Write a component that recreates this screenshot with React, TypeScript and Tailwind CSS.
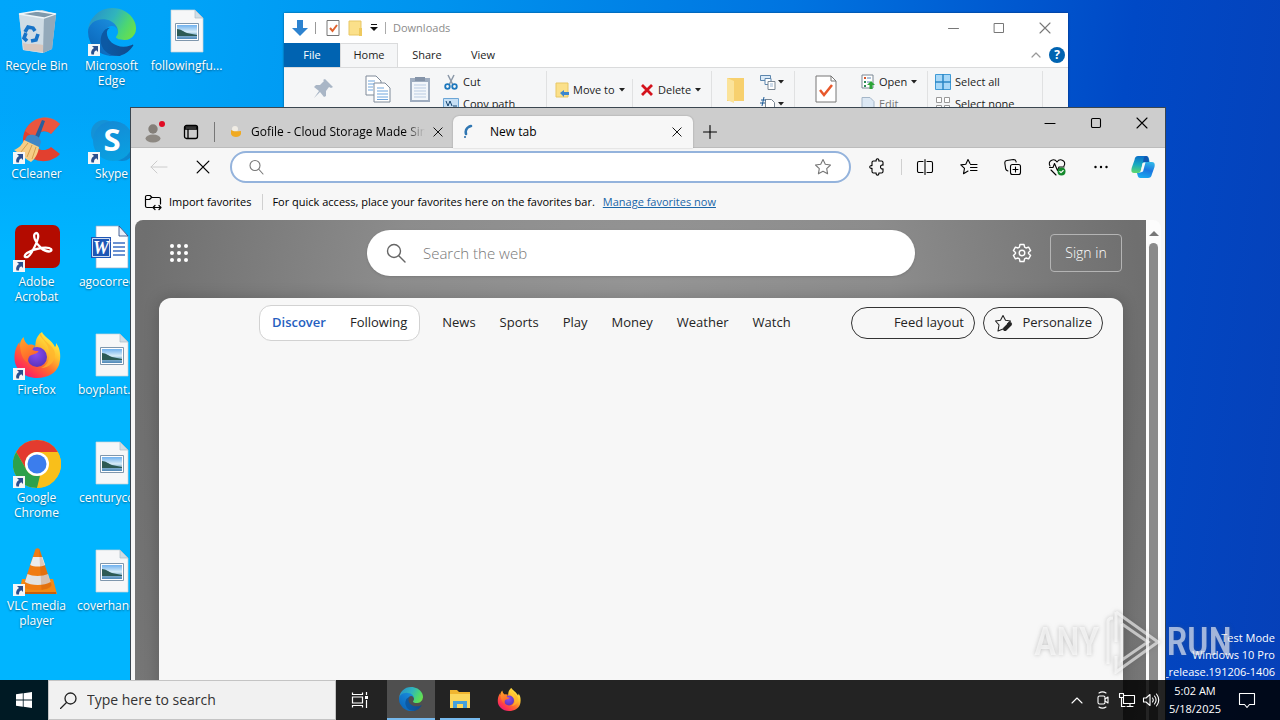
import React from "react";

type IconProps = { className?: string };
type Kids = { children?: React.ReactNode; className?: string };

/* ---------- logos ---------- */

function EdgeLogo({ className = "size-12" }: IconProps) {
  const id = React.useId();
  return (
    <svg viewBox="0 0 256 256" className={className} aria-hidden="true">
      <defs>
        <linearGradient id={id + "a"} x1="0.2" y1="0.5" x2="1" y2="0.5">
          <stop offset="0" stopColor="#0c59a4" />
          <stop offset="1" stopColor="#114a8b" />
        </linearGradient>
        <linearGradient id={id + "b"} x1="0.9" y1="0.1" x2="0.3" y2="1">
          <stop offset="0" stopColor="#1b8fdc" />
          <stop offset="0.5" stopColor="#1279cd" />
          <stop offset="1" stopColor="#0b66b8" />
        </linearGradient>
        <linearGradient id={id + "c"} x1="0" y1="0.3" x2="1" y2="0.7">
          <stop offset="0" stopColor="#2792c8" />
          <stop offset="0.45" stopColor="#30b4bd" />
          <stop offset="0.75" stopColor="#4bd674" />
          <stop offset="1" stopColor="#6be04a" />
        </linearGradient>
      </defs>
      <path fill={`url(#${id}a)`} d="M235.68 195.44a93.73 93.73 0 0 1-10.54 4.71 101.87 101.87 0 0 1-35.9 6.46c-47.32 0-88.54-32.55-88.54-74.32a31.48 31.48 0 0 1 16.43-27.31c-42.8 1.8-53.8 46.4-53.8 72.53 0 73.88 68.09 81.37 82.76 81.37 7.91 0 19.84-2.3 27-4.56l1.31-.44a128.34 128.34 0 0 0 66.6-52.8 4 4 0 0 0-5.32-5.64z" />
      <path fill={`url(#${id}b)`} d="M105.73 241.42a79.2 79.2 0 0 1-22.74-21.34 80.72 80.72 0 0 1 29.53-120c3.12-1.47 8.45-4.13 15.54-4a32.35 32.35 0 0 1 25.69 13 31.88 31.88 0 0 1 6.36 18.66c0-.21 24.46-79.6-80-79.6-43.9 0-80 41.66-80 78.21a130.15 130.15 0 0 0 12.11 56 128 128 0 0 0 156.38 67.11 75.55 75.55 0 0 1-62.78-8z" />
      <path fill={`url(#${id}c)`} d="M152.33 148.86c-.81 1.05-3.3 2.5-3.3 5.66 0 2.61 1.7 5.12 4.72 7.23 14.38 10 41.49 8.68 41.56 8.68a59.56 59.56 0 0 0 30.27-8.35 61.38 61.38 0 0 0 30.43-52.88c.26-22.41-8-37.31-11.34-43.91C223.46 23.84 177.72 0 128 0A128 128 0 0 0 0 126.2c.48-36.54 36.8-66.05 80-66.05 3.5 0 23.46.34 42 10.07 16.34 8.58 24.9 18.94 30.85 29.21 6.18 10.67 7.28 24.15 7.28 29.52s-2.74 13.33-7.8 19.91z" />
    </svg>
  );
}

function FirefoxLogo({ className = "size-12" }: IconProps) {
  const id = React.useId();
  return (
    <svg viewBox="0 0 48 48" className={className} aria-hidden="true">
      <defs>
        <linearGradient id={id + "f"} x1="0.85" y1="0.1" x2="0.2" y2="0.95">
          <stop offset="0" stopColor="#fff04a" />
          <stop offset="0.3" stopColor="#ffc02e" />
          <stop offset="0.6" stopColor="#ff6a2e" />
          <stop offset="0.85" stopColor="#ff3352" />
          <stop offset="1" stopColor="#e91d78" />
        </linearGradient>
        <radialGradient id={id + "p"} cx="0.45" cy="0.35" r="0.7">
          <stop offset="0" stopColor="#8a4cf0" />
          <stop offset="1" stopColor="#5a32b8" />
        </radialGradient>
        <linearGradient id={id + "o"} x1="0.2" y1="0" x2="0.6" y2="1">
          <stop offset="0" stopColor="#ffa32a" />
          <stop offset="1" stopColor="#ff5a2c" />
        </linearGradient>
      </defs>
      <path fill={`url(#${id}f)`} d="M29 0c1 4 10 8 13 15 1-1 1-2 1-4 5 6 5 15 3 22-3 8-11 13-22 13C11 46 1.500 37 1.500 26c0-5 1-11 5-16 0 2 0 3 1 4 1-2 2-3 3-4 0 3 1 5 3 6 3-1 6 0 8 1 2-4-1-11 7.500-17z" />
      <circle cx="24" cy="25" r="10" fill={`url(#${id}p)`} />
      <path fill={`url(#${id}o)`} d="M7 13c0-3 1-5 3.500-8 1 4 2 6 5 8 3-1 5 0 7 1-2 1-3 3-3 4 2 1 4 1 6 1-1 3-5 3-7 4-3 1-4 4-3 8-5-2-8-8-8.500-18z" />
      <path fill="#ffb52c" d="M26 2c2 5 12 10 10 23 0 5-3 9-8 11 8 0 14-6 14-14C42 13 29 10 28 1z" opacity=".75" />
    </svg>
  );
}

function ChromeLogo() {
  return (
    <svg viewBox="0 0 48 48" className="size-12" aria-hidden="true">
      <circle cx="24" cy="24" r="24" fill="#f9bf1a" />
      <path fill="#e33b2e" d="M24 0a24 24 0 0 1 20.800 12H24a12 12 0 0 0-10.400 18L3.200 12A24 24 0 0 1 24 0z" />
      <path fill="#2da14b" d="M3.200 12 13.600 30A12 12 0 0 0 24 36a12 12 0 0 0 3-.4L24 48A24 24 0 0 1 3.200 12z" />
      <path fill="#f9bf1a" d="M24 12h20.800A24 24 0 0 1 24 48l10.400-18A12 12 0 0 0 24 12z" />
      <circle cx="24" cy="24" r="12" fill="#fff" />
      <circle cx="24" cy="24" r="9.500" fill="#3b7ded" />
    </svg>
  );
}

function VlcLogo() {
  return (
    <svg viewBox="0 0 48 48" className="size-12" aria-hidden="true">
      <path d="M9 31h31l4 15H6z" fill="#f28a14" />
      <path d="M6 44h37v2H6z" fill="#c9600a" />
      <path d="M22.500 1c1-1 3-1 4 0l12 36c0 4-7 5-14 5s-14-1-14-5z" fill="#f07c12" />
      <path d="M20 9h9.500l2.700 8c-4 2-11 2-15 0z" fill="#ececec" />
      <path d="M14.500 26c5 2.500 15 2.500 20.500 0l2.600 8c-6 4-19.700 4-25.700 0z" fill="#e2e2e2" />
      <path d="M26 1l12.500 36c-2 4-7 4-10 5z" fill="#b64a00" opacity=".22" />
    </svg>
  );
}

function RecycleBin() {
  return (
    <svg viewBox="0 0 48 48" className="size-12" aria-hidden="true">
      <path d="M6 6 10 42l20 3 9-4 4-35-14-4z" fill="#c3d3de" />
      <path d="M6 6 31 10 30 45 10 42z" fill="#cfdce5" />
      <path d="M31 10 43 6 39 41l-9 4z" fill="#93a9ba" />
      <path d="M6 6 24 3l19 3-12 4z" fill="#7f99ac" stroke="#eef5f9" strokeWidth="1.300" />
      <path d="M10 35c6 2 13 0 20 2v7l-19-2z" fill="#dcb9a4" opacity=".6" />
      <g fill="none" stroke="#1673c8" strokeWidth="3.600">
        <path d="m12 24 3-5 5 1 2 3" />
        <path d="m25 26-2 6-5 1" />
        <path d="m14 33-3-3 2-5" />
      </g>
    </svg>
  );
}

function CCleanerLogo() {
  return (
    <svg viewBox="0 0 48 48" className="size-12" aria-hidden="true">
      <path d="M47 8 38 18c-6-6-16-2-16 7s9 12 16 6l9 7c-12 13-37 8-37-13C10 3 34-5 47 8z" fill="#e2402f" />
      <path d="M47 8 38 18c-6-6-16-2-16 4L12 15C18 1 36-4 47 8z" fill="#f0654a" opacity=".6" />
      <path d="m29 4 3 1-8 22-4-2z" fill="#285f9c" />
      <path d="M14 20c4-3 13-1 14 6l-2 6-15-6z" fill="#3f87c6" />
      <path d="m11 24 15 7c-1 7-4 12-8 15C11 42 5 36 1 34c5-2 8-5 10-10z" fill="#f5cd86" />
      <path d="m15 27-7 9m11-7-5 12m9-10-4 12" stroke="#d69f4e" fill="none" />
    </svg>
  );
}

function SkypeLogo() {
  return (
    <svg viewBox="0 0 48 48" className="size-12" aria-hidden="true">
      <defs>
        <linearGradient id="skype" x1="0" y1="0" x2="0.3" y2="1">
          <stop offset="0" stopColor="#1588d4" />
          <stop offset="1" stopColor="#0a9fe0" />
        </linearGradient>
      </defs>
      <circle cx="16" cy="17" r="13" fill="#1592d6" />
      <circle cx="34" cy="33" r="12" fill="#0c86cf" />
      <circle cx="25" cy="25" r="20" fill="url(#skype)" />
      <text x="24" y="35" textAnchor="middle" fontSize="31" fontWeight="700" fill="#fff" fontFamily="Open Sans, sans-serif">S</text>
    </svg>
  );
}

function AcrobatLogo() {
  return (
    <svg viewBox="0 0 48 48" className="size-12" aria-hidden="true">
      <rect x="2" y="1" width="45" height="43" rx="7" fill="#b30b00" />
      <path d="M14 33c-3 1-3-2 0-4 8-5 21-7 24-4 2 3-4 4-10-1-6-5-9-14-5-15 4 0 2 8-2 15-3 6-5 9-7 9z" fill="none" stroke="#fff" strokeWidth="2.300" />
    </svg>
  );
}

function PictureFile() {
  const id = React.useId();
  return (
    <svg viewBox="0 0 48 48" className="size-12" aria-hidden="true">
      <defs>
        <linearGradient id={id} x1="0" y1="0" x2="0" y2="1">
          <stop offset="0" stopColor="#6fb1ee" />
          <stop offset="0.5" stopColor="#d9edf8" />
          <stop offset="0.6" stopColor="#a6cbe0" />
          <stop offset="1" stopColor="#4f88b8" />
        </linearGradient>
      </defs>
      <path d="M8 2h24l8 8v34H8z" fill="#f6f7f8" stroke="#c9d2d8" strokeWidth=".7" />
      <path d="M32 2v8h8z" fill="#cfdde6" stroke="#aebcc6" strokeWidth=".7" />
      <path d="M12.500 15.500h23v17h-23z" fill="#fff" stroke="#7f97ad" />
      <path d="M14 17h20v14H14z" fill={`url(#${id})`} />
      <path d="M14 21c4 0 7 3 10 4l10 2v1H14z" fill="#2c5a54" />
    </svg>
  );
}

function WordFile() {
  return (
    <svg viewBox="0 0 48 48" className="size-12" aria-hidden="true">
      <path d="M8 2h23l9 10v32H8z" fill="#fff" stroke="#8ea7c9" strokeWidth=".7" />
      <path d="M31 2v10h9z" fill="#e6eefa" stroke="#1f3f7c" strokeWidth=".8" />
      <path d="M25 19h12m-12 4h12m-12 4h12m-12 4h12" stroke="#3d6fc4" strokeWidth="1.300" />
      <path d="M3 13h20v21H3z" fill="#1f57b5" />
      <path d="M4.500 14.500h17v18h-17z" fill="none" stroke="#fff" strokeWidth=".8" />
      <text x="13" y="30" textAnchor="middle" fontSize="18" fontWeight="700" fontStyle="italic" fill="#fff" fontFamily="Liberation Serif, serif">W</text>
    </svg>
  );
}

function ShortcutArrow() {
  return (
    <svg viewBox="0 0 12 12" className="absolute bottom-0 left-0 size-3" aria-hidden="true">
      <path d="M0 0h12v12H0z" fill="#f4f6f8" />
      <path d="M4 2h6v6L8.300 6.300C6.500 7 6 8.500 6 10.500H3.500C2.500 8 3.500 5.500 6 4z" fill="#2b4f8e" />
    </svg>
  );
}

function CopilotLogo() {
  return (
    <svg viewBox="0 0 24 24" className="size-6" aria-hidden="true">
      <defs>
        <linearGradient id="cpa" x1="0.3" y1="0" x2="0.2" y2="1">
          <stop offset="0" stopColor="#0a6fc9" />
          <stop offset="0.5" stopColor="#18aac0" />
          <stop offset="1" stopColor="#5fd96b" />
        </linearGradient>
        <linearGradient id="cpb" x1="0.7" y1="0" x2="0.4" y2="1">
          <stop offset="0" stopColor="#2fb6e8" />
          <stop offset="0.5" stopColor="#1b76e0" />
          <stop offset="1" stopColor="#19a8ef" />
        </linearGradient>
      </defs>
      <path d="M7 1h8c2 0 2.500 1 3 3l.5 3h-4c-2 0-2.500 1-3 3l-1.500 5c-.5 2-1 3-3 3H3c-3 0-3-3-2-6L3.500 5C4 2 5 1 7 1z" fill="url(#cpa)" />
      <path d="M12 7h6l-1-4c-.5-1-1-2-2-2-2 0-2.500 3-3 6z" fill="#1057b0" />
      <path d="M17 23H9.500c-2 0-2.500-1-3-3L6 18h1.500c2 0 2.500-1 3-3L12 10c.5-2 1-3 3-3h6c3 0 3 3 2.500 5L21 19c-.7 3-2 4-4 4z" fill="url(#cpb)" />
      <path d="m11.500 8 3-.5-2.500 9-2.500 1z" fill="#f7f7f7" />
    </svg>
  );
}

/* ---------- line icons ---------- */

function Line({ children, className = "size-5", box = 20, width = 1.1 }: Kids & { box?: number; width?: number }) {
  return (
    <svg viewBox={`0 0 ${box} ${box}`} className={className} fill="none" stroke="currentColor" strokeWidth={width} strokeLinecap="round" strokeLinejoin="round" aria-hidden="true">
      {children}
    </svg>
  );
}

const CloseGlyph = ({ className = "size-3" }: IconProps) => (
  <Line box={12} className={className} width={1.1}><path d="m1 1 10 10M11 1 1 11" /></Line>
);

const starPath = "m10 2.500 2.300 4.800 5.200.7-3.800 3.600.9 5.200-4.600-2.500-4.600 2.500.9-5.200L2.500 8l5.200-.7z";

/* ---------- desktop ---------- */

function DesktopIcon({ label, icon, shortcut = false }: { label: string; icon: React.ReactNode; shortcut?: boolean }) {
  return (
    <button type="button" className="flex h-[108px] w-[75px] flex-col items-center gap-0.5 pr-0.5 pt-2 text-center">
      <span className="relative block size-12 shrink-0">
        {icon}
        {shortcut && <ShortcutArrow />}
      </span>
      <span className="text-xs leading-[15px] text-white [text-shadow:0_1px_2px_rgba(0,0,0,0.45)]">{label}</span>
    </button>
  );
}

function Desktop() {
  return (
    <div className="flex">
      <div className="flex flex-col">
        <DesktopIcon label="Recycle Bin" icon={<RecycleBin />} />
        <DesktopIcon label="CCleaner" icon={<CCleanerLogo />} shortcut />
        <DesktopIcon label="Adobe Acrobat" icon={<AcrobatLogo />} shortcut />
        <DesktopIcon label="Firefox" icon={<FirefoxLogo />} shortcut />
        <DesktopIcon label="Google Chrome" icon={<ChromeLogo />} shortcut />
        <DesktopIcon label="VLC media player" icon={<VlcLogo />} shortcut />
      </div>
      <div className="flex flex-col">
        <DesktopIcon label="Microsoft Edge" icon={<EdgeLogo />} shortcut />
        <DesktopIcon label="Skype" icon={<SkypeLogo />} shortcut />
        <DesktopIcon label="agocorrec..." icon={<WordFile />} />
        <DesktopIcon label="boyplant.pn" icon={<PictureFile />} />
        <DesktopIcon label="centuryco..." icon={<PictureFile />} />
        <DesktopIcon label="coverhand..." icon={<PictureFile />} />
      </div>
      <div className="flex flex-col">
        <DesktopIcon label="followingfu..." icon={<PictureFile />} />
      </div>
    </div>
  );
}

/* ---------- file explorer ---------- */

const Caret = () => (
  <svg viewBox="0 0 6 4" className="h-1 w-1.5 shrink-0" aria-hidden="true"><path d="M0 0h6L3 3.500z" fill="#222" /></svg>
);

function RibbonItem({ icon, label, caret, muted }: { icon: React.ReactNode; label: string; caret?: boolean; muted?: boolean }) {
  return (
    <button type="button" className={`flex h-[22px] items-center gap-1 whitespace-nowrap ${muted ? "text-[#777]" : "text-[#1c1c1c]"}`}>
      {icon}
      <span>{label}</span>
      {caret && <Caret />}
    </button>
  );
}

function Explorer() {
  return (
    <section aria-label="Downloads" className="absolute left-[284px] top-[13px] flex h-[400px] w-[784px] flex-col bg-white text-[11px] text-[#1c1c1c] shadow-[0_0_2px_rgba(0,0,0,0.5)]">
      <header className="flex h-[30px] items-center">
        <div className="flex flex-1 items-center pl-2">
          <svg viewBox="0 0 16 18" className="h-[18px] w-4" aria-hidden="true"><path d="M5 1h6v8h5l-8 8-8-8h5z" fill="#2d83d0" /></svg>
          <span className="ml-[7px] h-3 w-px bg-[#999]" />
          <svg viewBox="0 0 14 18" className="ml-2.5 h-[18px] w-3.5" aria-hidden="true">
            <path d="M1 1.500h12v15H1z" fill="#fff" stroke="#777" />
            <path d="m4 9 2.500 3L11 6" fill="none" stroke="#e0632f" strokeWidth="2" />
          </svg>
          <svg viewBox="0 0 14 16" className="ml-2 h-4 w-3.5" aria-hidden="true"><path d="M1 1h12v14H1z" fill="#fbe08a" stroke="#e8c765" /><path d="M11 8h3v8h-3z" fill="#eec95e" /></svg>
          <svg viewBox="0 0 8 8" className="ml-2 size-2" aria-hidden="true"><path d="M1 0h6v1H1zM0 3h8L4 7z" fill="#111" /></svg>
          <span className="ml-[7px] h-3 w-px bg-[#aaa]" />
          <h2 className="ml-[7px] text-[#8b8b8b]">Downloads</h2>
        </div>
        <div className="flex text-[#777]">
          <button type="button" aria-label="Minimize" className="flex w-[45px] justify-center"><Line box={12} className="size-3" width={1}><path d="M.5 6.500h10" /></Line></button>
          <button type="button" aria-label="Maximize" className="flex w-[45px] justify-center"><Line box={12} className="size-3" width={1}><path d="M1.500 1.500h9v9h-9z" /></Line></button>
          <button type="button" aria-label="Close" className="flex w-[47px] justify-center"><CloseGlyph /></button>
        </div>
      </header>
      <div className="flex h-6 items-stretch text-center">
        <button type="button" className="w-14 bg-[#0063b1] text-white">File</button>
        <button type="button" className="w-[58px] border border-b-0 border-[#dadbdc] bg-[#f5f6f7]">Home</button>
        <button type="button" className="w-[58px]">Share</button>
        <button type="button" className="w-[54px]">View</button>
        <div className="flex flex-1 items-center justify-end gap-2 pr-[3px] text-[#999]">
          <button type="button" aria-label="Collapse ribbon"><Line box={10} className="size-2.5" width={1.2}><path d="m1 7 4-4 4 4" /></Line></button>
          <button type="button" aria-label="Help" className="flex size-4 items-center justify-center rounded-full bg-[#0063b1] text-xs font-bold leading-4 text-white">?</button>
        </div>
      </div>
      <div className="flex h-24 border-y border-[#dadbdc] bg-[#f5f6f7] pt-[3px]">
        <div className="flex w-[263px] border-r border-[#e0e1e2]">
          <svg viewBox="0 0 24 24" className="ml-[27px] mt-1.5 size-6" aria-hidden="true">
            <path d="m14 2 8 8-2 1-2-1-3 4 0 5-2 1-4-5-6 6 5-7-5-4 2-2h4l4-4-1-1z" fill="#a9b6c6" />
          </svg>
          <svg viewBox="0 0 26 28" className="ml-[30px] mt-1 h-7 w-[26px]" aria-hidden="true">
            <path d="M1 1h10l5 5v14H1z" fill="#fff" stroke="#7e8a99" />
            <path d="M9 8h11l5 5v14H9z" fill="#fff" stroke="#7e8a99" />
            <path d="M3 6h7M3 9h6M3 12h5M3 15h5M12 13h7M12 16h11M12 19h11M12 22h11M12 24.500h11" stroke="#6fa5dd" />
          </svg>
          <svg viewBox="0 0 22 28" className="ml-[18px] mt-1 h-7 w-[22px]" aria-hidden="true">
            <path d="M1 3h20v24H1z" fill="#9fadc0" />
            <path d="M3 7h16v18H3z" fill="#f2f6fb" />
            <path d="M6 2h10v4H6z" fill="#8493a8" />
            <path d="M5 10h12M5 13h12M5 16h12M5 19h12M5 22h12" stroke="#b9cbe2" />
          </svg>
          <div className="ml-3 flex flex-col">
            <RibbonItem label="Cut" icon={
              <svg viewBox="0 0 16 16" className="size-4" aria-hidden="true"><path d="m5 1 5 10M11 1 6 11" stroke="#8b98a8" strokeWidth="1.500" /><circle cx="4.500" cy="12.500" r="2.300" fill="none" stroke="#1e78bd" strokeWidth="1.800" /><circle cx="11.500" cy="12.500" r="2.300" fill="none" stroke="#1e78bd" strokeWidth="1.800" /></svg>
            } />
            <RibbonItem label="Copy path" icon={
              <svg viewBox="0 0 16 12" className="h-3 w-4" aria-hidden="true"><path d="M.5.500h15v11H.5z" fill="#c7e0f5" stroke="#6ca6d6" /><path d="m3 3 2 5 2-5 2 5M10 8h4" stroke="#14446f" fill="none" /></svg>
            } />
          </div>
        </div>
        <div className="mt-2 flex h-20 w-[86px] border-r border-[#e0e1e2] pl-2">
          <RibbonItem label="Move to" caret icon={
            <svg viewBox="0 0 14 16" className="h-4 w-3.5" aria-hidden="true"><path d="M1 1h12v14H1z" fill="#fbe08a" stroke="#e8c765" /><path d="m5 11 4-3v2h5v3H9v2z" fill="#3b87cf" /></svg>
          } />
        </div>
        <div className="mt-2 flex h-20 w-[78px] pl-[7px]">
          <RibbonItem label="Delete" caret icon={
            <svg viewBox="0 0 14 14" className="size-3.5" aria-hidden="true"><path d="m2 2 10 10M12 2 2 12" stroke="#d4121c" strokeWidth="2.800" /></svg>
          } />
        </div>
        <div className="flex w-[84px] border-x border-[#e0e1e2] pl-3.5">
          <svg viewBox="0 0 20 28" className="mt-1 h-7 w-5" aria-hidden="true"><path d="M1 3h17v23H1z" fill="#f7d06e" /><path d="m1 3 7 3v22l-7-3z" fill="#fbe39a" /></svg>
          <div className="ml-3.5 flex flex-col">
            <span className="flex h-[22px] items-center gap-0.5">
              <svg viewBox="0 0 16 16" className="size-4" aria-hidden="true"><path d="M.5 1.500h10v5H.5z" fill="#dcebf8" stroke="#5d86ad" /><path d="M5 4.500h6v6H5z" fill="#fff" stroke="#5d86ad" /><path d="M8 7.500h7v8H8z" fill="#fff" stroke="#7b8793" /><path d="M10 10h3m-3 2h3" stroke="#9db9d6" /></svg>
              <Caret />
            </span>
            <span className="flex h-[22px] items-center gap-0.5">
              <svg viewBox="0 0 16 16" className="size-4" aria-hidden="true"><path d="M5.500 3.500h6l3 3v9h-9z" fill="#fff" stroke="#7b8793" /><path d="M1 4h5M0 7h5M4 1 2 10" stroke="#1e5c97" /></svg>
              <Caret />
            </span>
          </div>
        </div>
        <div className="flex w-[133px] border-r border-[#e0e1e2] pl-5">
          <svg viewBox="0 0 22 28" className="mt-1 h-7 w-[22px]" aria-hidden="true"><path d="M1 1h15l5 5v21H1z" fill="#fff" stroke="#777" /><path d="M16 1v5h5" fill="none" stroke="#777" /><path d="m5 15 4 5 8-10" fill="none" stroke="#e8582b" strokeWidth="2.500" /></svg>
          <div className="ml-6 flex flex-col">
            <RibbonItem label="Open" caret icon={
              <svg viewBox="0 0 14 16" className="h-4 w-3.5" aria-hidden="true"><path d="M1 1h11v13H1z" fill="#fff" stroke="#7b8793" /><path d="M3 3h2v2H3z" fill="#d5562b" /><path d="M3 7h2v2H3zM3 11h2v2H3z" fill="#2c8b57" /><path d="M6 4h4m-4 4h3" stroke="#5b86b5" /><path d="m10 7 4 4h-2.500v4h-3v-4H6z" fill="#2da436" /></svg>
            } />
            <RibbonItem label="Edit" muted icon={
              <svg viewBox="0 0 14 16" className="h-4 w-3.5" aria-hidden="true"><path d="M1 1.500h8l4 4v9H1z" fill="#dce8f4" stroke="#a4b6c8" /></svg>
            } />
          </div>
        </div>
        <div className="flex w-[115px] flex-col border-r border-[#e0e1e2] pl-[7px]">
          <RibbonItem label="Select all" icon={
            <svg viewBox="0 0 16 16" className="size-4" aria-hidden="true"><path d="M.5.500h15v15H.5z" fill="#a8d8f8" stroke="#3f9ad6" /><path d="M8 0v16M0 8h16" stroke="#2b86c5" strokeWidth="1.500" /></svg>
          } />
          <RibbonItem label="Select none" icon={
            <svg viewBox="0 0 16 16" className="size-4" aria-hidden="true"><path d="M1.500 1.500h5v5h-5zM9.500 1.500h5v5h-5zM1.500 9.500h5v5h-5zM9.500 9.500h5v5h-5z" fill="#fff" stroke="#999" /></svg>
          } />
        </div>
      </div>
    </section>
  );
}

/* ---------- browser ---------- */

function TabStrip() {
  return (
    <header className="flex h-10 shrink-0 border-b border-[#bcbcbc] bg-[#cdcdcd]">
      <div className="flex w-[322px] shrink-0 items-center pt-2">
        <button type="button" aria-label="Profile" className="ml-2.5 flex w-7 justify-center">
          <svg viewBox="0 0 24 24" className="size-6" aria-hidden="true">
            <circle cx="10" cy="9" r="4.700" fill="#847f79" />
            <ellipse cx="10" cy="18.500" rx="7.500" ry="4" fill="#8d8882" />
            <circle cx="19" cy="4" r="3" fill="#e00b24" />
          </svg>
        </button>
        <button type="button" aria-label="Tab actions" className="ml-3.5">
          <Line box={16} className="size-4" width={1.3}><rect x="1.500" y="1.500" width="13" height="13" rx="2" /><path d="M2 3h12v2H2zM5 5v9" /></Line>
        </button>
        <span className="ml-[15px] h-5 w-px bg-[#777]" />
        <svg viewBox="0 0 12 14" className="ml-[15px] h-3.5 w-3" aria-hidden="true"><circle cx="5" cy="4" r="3" fill="#f0ece4" /><path d="M1 5c3 2 6 1 10 1v3c-1 4-9 4-10 0z" fill="#f0aa22" /></svg>
        <span className="ml-[9px] w-[174px] overflow-hidden whitespace-nowrap text-xs [mask-image:linear-gradient(to_right,#000_88%,transparent)]">Gofile - Cloud Storage Made Simple</span>
        <button type="button" aria-label="Close tab" className="ml-2"><CloseGlyph className="size-2.5" /></button>
      </div>
      <div className="mt-2 flex h-8 w-[240px] shrink-0 items-center rounded-t-md bg-[#f7f7f7] pl-[9px] pr-[11px] text-xs shadow-[0_0_2px_rgba(0,0,0,0.25)]">
        <svg viewBox="0 0 12 16" className="h-4 w-3" aria-hidden="true"><path d="M9 2C5 3 3 6 4 10" fill="none" stroke="#2f76b2" strokeWidth="2.600" strokeLinecap="round" strokeDasharray="3 1" /><circle cx="3" cy="13" r="1" fill="#2769a4" /></svg>
        <span className="ml-4 flex-1">New tab</span>
        <button type="button" aria-label="Close tab"><CloseGlyph className="size-2.5" /></button>
      </div>
      <button type="button" aria-label="New tab" className="ml-2.5 mt-2"><Line box={14} className="size-3.5" width={1.1}><path d="M7 .5v13M.5 7h13" /></Line></button>
      <div className="ml-auto flex h-[30px] items-center">
        <button type="button" aria-label="Minimize" className="flex w-[46px] justify-center"><Line box={12} className="size-3"><path d="M1 6.500h10" /></Line></button>
        <button type="button" aria-label="Maximize" className="flex w-[46px] justify-center"><Line box={12} className="size-3"><rect x="1.500" y="1.500" width="9" height="9" rx="1.200" /></Line></button>
        <button type="button" aria-label="Close" className="flex w-[46px] justify-center"><CloseGlyph /></button>
      </div>
    </header>
  );
}

function ToolButton({ label, children }: { label: string; children: React.ReactNode }) {
  return <button type="button" aria-label={label} className="flex w-11 shrink-0 justify-center">{children}</button>;
}

function Toolbar() {
  return (
    <div className="flex h-[38px] shrink-0 items-center">
      <button type="button" aria-label="Back" className="ml-[19px] text-[#cccccc]"><Line box={18} className="size-[18px]" width={1}><path d="M17 9H1m6-6L1 9l6 6" /></Line></button>
      <button type="button" aria-label="Stop" className="ml-7"><CloseGlyph className="size-3.5" /></button>
      <div className="ml-5 flex h-8 flex-1 items-center rounded-full border-2 border-[#94b3dc] bg-white px-4 text-[#777]">
        <Line box={16} className="size-4"><circle cx="7" cy="6.500" r="5" /><path d="m11 10.500 4 4.500" /></Line>
        <input type="text" aria-label="Address" className="min-w-0 flex-1 px-2 text-sm text-black outline-none" />
        <Line className="size-5"><path d={starPath} /></Line>
      </div>
      <div className="ml-[5px] flex items-center">
        <ToolButton label="Extensions">
          <Line><path d="M5.500 4h2.700c-.7-3 3.300-3 2.600 0h2.700A1.500 1.500 0 0 1 15 5.500v2.700c-1-.4-2.500 0-2.500 1.800s1.500 2.300 2.500 1.800v2.700a1.500 1.500 0 0 1-1.500 1.500h-2.700c.7 2.800-3.300 2.800-2.600 0H5.500A1.500 1.500 0 0 1 4 14.500v-3.200c-3 .7-3-3.300 0-2.600V5.500A1.500 1.500 0 0 1 5.500 4z" /></Line>
        </ToolButton>
        <span className="mx-px h-4 w-px bg-[#d0d0d0]" />
        <ToolButton label="Split screen">
          <Line><path d="M8 4.500H4A1.500 1.500 0 0 0 2.500 6v8A1.500 1.500 0 0 0 4 15.500h4M12 4.500h4A1.500 1.500 0 0 1 17.500 6v8a1.500 1.500 0 0 1-1.500 1.500h-4M10 2.500v15" /></Line>
        </ToolButton>
        <ToolButton label="Favorites">
          <Line><path d="M11 6.500 9 2.500 6.800 7.200l-5 .7 3.700 3.500-1 5.300L9 14M11.500 7.500H18M11.500 10.500H18M11.500 13.500H18" /></Line>
        </ToolButton>
        <ToolButton label="Collections">
          <Line><rect x="7.500" y="7.500" width="10" height="10" rx="2" /><path d="M12.500 10v5m-2.500-2.500h5M5 14c-1.500-.3-2-1-2.300-2L1.800 6C1.700 4.500 2.300 3.700 3.800 3.500l6.700-1c1.500 0 2.300.5 2.600 2v.5" /></Line>
        </ToolButton>
        <ToolButton label="Browser essentials">
          <Line><path d="M3 9C0 4 7 .5 10 5c3-4.500 10-1 7 4M2.500 10.500H6l1.500-4 3 7L12 10h5M4 13l5 5" /><circle cx="14.500" cy="14.500" r="4" fill="#14892c" stroke="none" /><path d="m12.800 14.500 1.200 1.200 2.200-2.200" stroke="#fff" /></Line>
        </ToolButton>
        <ToolButton label="Settings and more">
          <Line><path d="M4.500 10h.01M10 10h.01M15.500 10h.01" strokeWidth="2.400" /></Line>
        </ToolButton>
        <button type="button" aria-label="Copilot" className="ml-2 mr-2.5 shrink-0"><CopilotLogo /></button>
      </div>
    </div>
  );
}

function FavoritesBar() {
  return (
    <div className="flex h-[34px] shrink-0 items-center pb-0.5 pl-[13px] text-[11px]">
      <Line box={18} className="size-[18px]" width={1.2}><path d="M8 14.500H3A1.500 1.500 0 0 1 1.500 13V4A1.500 1.500 0 0 1 3 2.500h3l2 2h7A1.500 1.500 0 0 1 16.500 6v5M1.500 6.500h4l2-2M9 14.500h8m-6-2-2 2 2 2m4-4 2 2-2 2" /></Line>
      <button type="button" className="ml-[7px]">Import favorites</button>
      <span className="ml-[11px] mr-[9px] h-4 w-px bg-[#d0d0d0]" />
      <span>For quick access, place your favorites here on the favorites bar.</span>
      <a href="#favorites" className="ml-2 text-[#1a66a8] underline">Manage favorites now</a>
    </div>
  );
}

const topics = ["News", "Sports", "Play", "Money", "Weather", "Watch"];

function NewTabPage() {
  return (
    <main className="flex min-w-0 flex-1 flex-col overflow-hidden rounded-tl-lg bg-[radial-gradient(ellipse_at_50%_15%,#959595_0%,#8c8c8c_35%,#6f6f6f_70%,#777777_100%)] pl-6 pr-[23px]">
      <div className="flex h-[78px] shrink-0 items-start justify-between pt-2.5">
        <button type="button" aria-label="Apps" className="ml-2.5 mt-[13px] text-white">
          <svg viewBox="0 0 20 20" className="size-5" fill="currentColor" aria-hidden="true">
            {[3, 10, 17].map((y) => [3, 10, 17].map((x) => <circle key={`${x}-${y}`} cx={x} cy={y} r="2" />))}
          </svg>
        </button>
        <div className="ml-[81px] flex h-[46px] w-[548px] items-center rounded-full bg-white px-[18px] text-[#666] shadow-sm">
          <Line box={22} className="size-[22px]" width={1.4}><circle cx="9" cy="9" r="6.500" /><path d="m14 14 6 6" /></Line>
          <input type="text" aria-label="Search the web" placeholder="Search the web" className="ml-4 min-w-0 flex-1 text-[15px] font-light outline-none placeholder:text-[#777]" />
        </div>
        <div className="flex items-center gap-[18px] pr-px pt-1 text-white">
          <button type="button" aria-label="Page settings">
            <Line className="size-5" width={1.4}><circle cx="10" cy="10" r="2.800" /><path d="M8 1.500h4l.6 2.700 1.400.8 2.600-.9 2 3.500L16.500 9.500v1l2.100 1.900-2 3.500-2.600-.9-1.400.8-.6 2.700H8l-.6-2.700-1.400-.8-2.600.9-2-3.500 2.100-1.900v-1L1.400 7.600l2-3.500 2.600.9 1.400-.8z" /></Line>
          </button>
          <button type="button" className="h-[38px] w-[72px] rounded-sm border border-[#b4b4b4] text-sm font-light">Sign in</button>
        </div>
      </div>
      <section className="flex min-h-0 flex-1 items-start rounded-t-xl bg-[#f7f7f7] pl-[100px] pr-5 pt-[7px] text-[13px] text-[#242424] shadow-[0_0_16px_rgba(0,0,0,0.2)]">
        <div className="flex h-9 items-center gap-6 rounded-xl border border-[#d2d2d2] bg-white px-3">
          <button type="button" className="font-semibold text-[#2560c0]">Discover</button>
          <button type="button">Following</button>
        </div>
        <nav className="ml-[22px] flex h-9 items-center gap-6">
          {topics.map((t) => <a key={t} href="#feed">{t}</a>)}
        </nav>
        <div className="ml-auto flex gap-2 pt-0.5">
          <button type="button" className="flex h-8 w-[124px] items-center justify-end rounded-full border border-[#333] pr-2.5">Feed layout</button>
          <button type="button" className="flex h-8 w-[120px] items-center justify-end gap-2 rounded-full border border-[#333] pr-2.5">
            <Line width={1.1}><path d="m9 16-5 2 1-6L1.500 8l5-.7L9 2.500l2.500 4.800 5 .7-3 3" /><path d="m11 16 5-5" strokeWidth="4" /></Line>
            Personalize
          </button>
        </div>
      </section>
    </main>
  );
}

function Browser() {
  return (
    <section aria-label="Browser" className="absolute bottom-0 left-[130px] top-[107px] flex w-[1036px] flex-col border border-b-0 border-[#3a4650] bg-[#f7f7f7] text-black">
      <TabStrip />
      <Toolbar />
      <FavoritesBar />
      <div className="flex min-h-0 flex-1 pl-1 pr-1">
        <NewTabPage />
        <div className="flex w-[15px] flex-col items-center rounded-tr-lg bg-[#fcfcfc] pt-2.5">
          <svg viewBox="0 0 10 6" className="h-1.5 w-2.5" aria-hidden="true"><path d="m0 6 5-5 5 5z" fill="#777" /></svg>
          <div className="mt-[7px] w-[9px] flex-1 rounded-t-full bg-[#8a8a8a]" />
        </div>
      </div>
    </section>
  );
}

/* ---------- taskbar ---------- */

function Taskbar() {
  return (
    <footer className="absolute inset-x-0 bottom-0 flex h-10 items-stretch bg-black/86 text-white">
      <button type="button" aria-label="Start" className="flex w-12 items-center justify-center">
        <svg viewBox="0 0 16 16" className="size-4" fill="#fff" aria-hidden="true"><path d="M0 2.300 6.800 1.300v6.300H0zM7.600 1.200 16 0v7.600H7.600zM0 8.400h6.800v6.300L0 13.700zM7.600 8.400H16V16l-8.400-1.200z" /></svg>
      </button>
      <div className="flex w-72 items-center border border-[#c4c4c4] bg-[#f1f1f1] pl-[11px] text-[#222]">
        <Line box={17} className="size-[17px]" width={1.3}><circle cx="10.500" cy="6.500" r="5.500" /><path d="m6.500 10.500-6 6" /></Line>
        <input type="text" aria-label="Type here to search" placeholder="Type here to search" className="ml-2.5 min-w-0 flex-1 text-sm outline-none placeholder:text-[#333]" />
      </div>
      <button type="button" aria-label="Task view" className="flex w-[51px] items-center justify-center pr-1">
        <svg viewBox="0 0 18 16" className="h-4 w-[18px]" fill="none" stroke="#fff" strokeWidth="1.200" aria-hidden="true"><path d="M1.500 .5V2.500h10V.5M1.500 5h10v6h-10zM1.500 15.500v-2h10v2M15.500 0v3m0 5v8" /><path d="M14 4h3v3h-3z" fill="#fff" stroke="none" /></svg>
      </button>
      <button type="button" aria-label="Microsoft Edge" className="flex w-12 items-center justify-center border-b-2 border-[#76b9ed] bg-white/20"><EdgeLogo className="size-6" /></button>
      <button type="button" aria-label="File Explorer" className="mx-[5px] flex w-10 items-center justify-center border-b-2 border-[#76b9ed]">
        <svg viewBox="0 0 24 24" className="size-6" aria-hidden="true"><path d="M2 3h7l2 2h11v15H2z" fill="#f0b530" /><path d="M2 7h20v14H2z" fill="#fbd65c" /><path d="M5 21v-7h14v7h-4v-4H9v4z" fill="#45a0dc" /></svg>
      </button>
      <button type="button" aria-label="Firefox" className="flex w-12 items-center justify-center"><FirefoxLogo className="size-6" /></button>
      <div className="ml-auto flex items-center">
        <button type="button" aria-label="Show hidden icons"><Line box={14} className="size-3.5"><path d="m2 10 5-5 5 5" /></Line></button>
        <Line box={18} className="ml-2.5 size-[18px]"><rect x="4" y="5" width="7" height="8" rx="1.500" /><path d="m11 8 3-2v6l-3-2M5 2c2-1.300 5-1.300 7 0M5 16c2 1.300 5 1.300 7 0" /></Line>
        <Line box={18} className="ml-1.5 size-[18px]" width={1.1}><path d="M5.500 4.500h11v8h-11zM9 15.500h6m-3-3v3M1.500 2.500h4v4h-4zM3.500 6.500v9H7" /></Line>
        <Line box={18} className="ml-1.5 size-[18px]" width={1.1}><path d="M1.500 7v4H4l4 3.500v-11L4 7zM10.500 7c1 1.300 1 2.700 0 4M12.500 5c2 2.500 2 5.500 0 8M14.500 3c3 4 3 8 0 12" /></Line>
        <time className="ml-2 block w-[54px] text-center text-[11px] leading-[18px]">5:02 AM<br />5/18/2025</time>
        <button type="button" aria-label="Notifications" className="ml-4 mr-6"><Line box={18} className="size-[18px]"><path d="M1.500 2.500h15v11h-5l-2.500 3-2.500-3h-5z" /></Line></button>
      </div>
    </footer>
  );
}

function Watermark() {
  return (
    <div className="pointer-events-none absolute bottom-[46px] right-12 flex items-center text-white/60 [filter:drop-shadow(0_0_2px_rgba(90,90,90,0.55))]" aria-hidden="true">
      <span className="font-['Liberation_Sans_Narrow','Roboto_Condensed','DejaVu_Sans_Condensed'] text-[38px] font-medium leading-none">ANY</span>
      <svg viewBox="0 0 56 64" className="ml-[5px] mr-1.5 h-16 w-14" fill="none" stroke="currentColor" strokeWidth="3">
        <path d="M12 2 54 32 12 62V46M12 2v30M18 14l26 18-26 18V14M4 54V12q0-4 5-4" />
      </svg>
      <span className="font-['Liberation_Sans_Narrow','Roboto_Condensed','DejaVu_Sans_Condensed'] text-[38px] font-medium leading-none">RUN</span>
    </div>
  );
}

export default function App() {
  return (
    <div className="relative h-screen w-full overflow-hidden bg-[linear-gradient(97deg,#00a6fb_0%,#00a4f8_12%,#0093ee_32%,#0074e0_58%,#0049c6_83%,#0640b8_100%)] font-['Open_Sans','Noto_Sans',sans-serif]">
      <div className="absolute inset-y-0 left-0 w-[130px] bg-linear-to-b from-transparent from-15% to-[#00b5ff] to-35%" />
      <div className="relative"><Desktop /></div>
      <p className="absolute bottom-10 right-[5px] text-right text-[11px] leading-[17px] text-white">
        Test Mode<br />Windows 10 Pro<br />_release.191206-1406
      </p>
      <Explorer />
      <Browser />
      <Taskbar />
      <Watermark />
    </div>
  );
}
